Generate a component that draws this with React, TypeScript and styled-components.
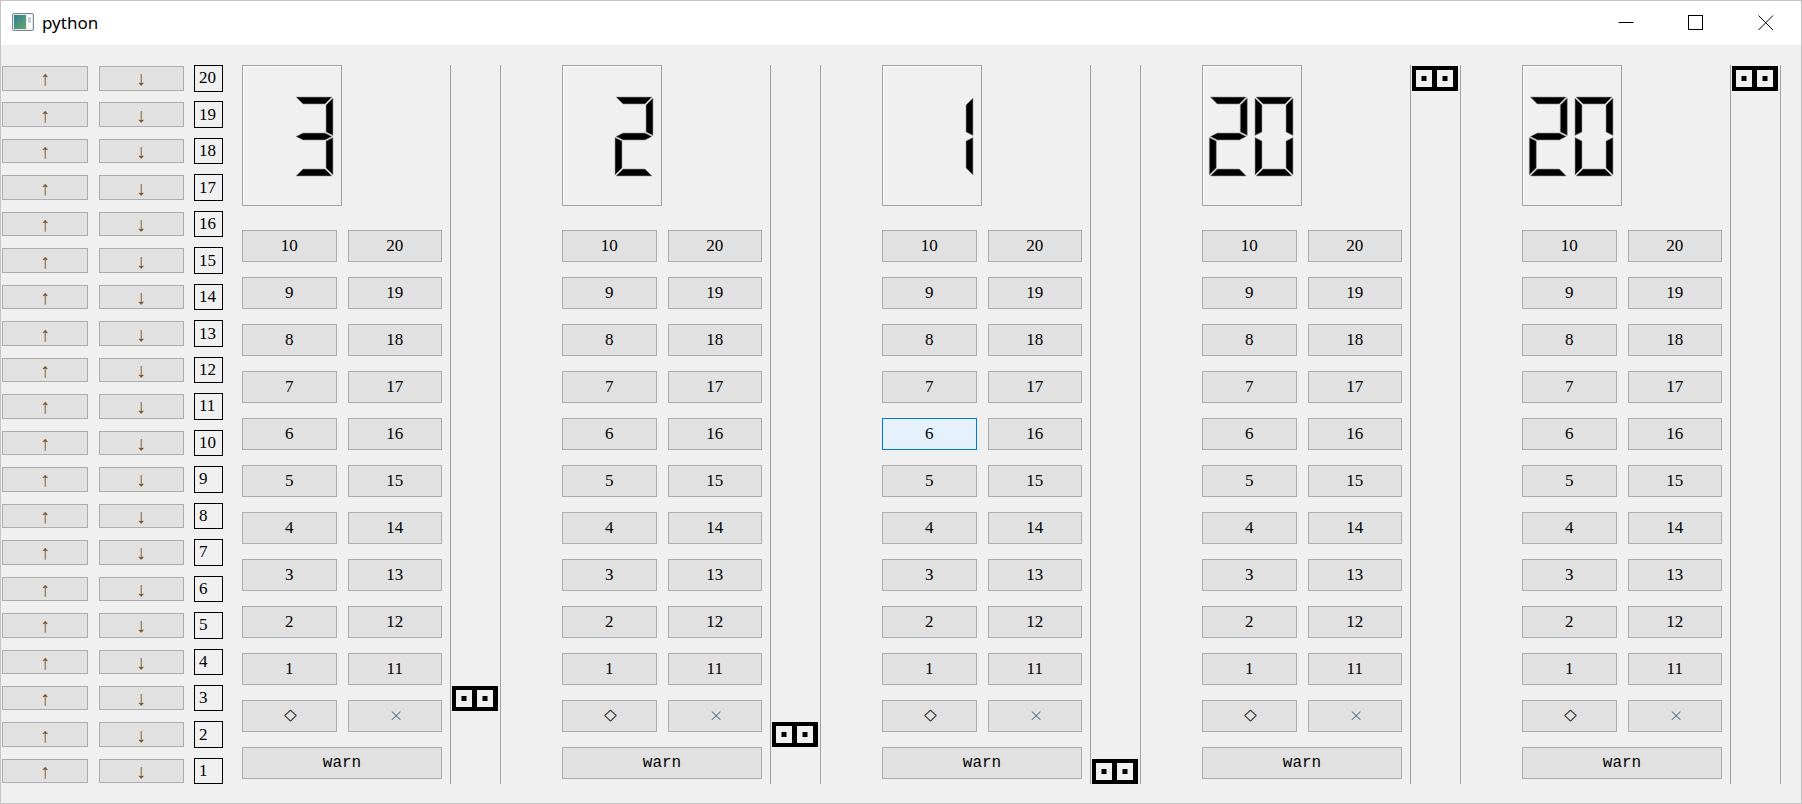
import React from "react";
import styled, { createGlobalStyle } from "styled-components";

const GlobalStyle = createGlobalStyle`
  html, body { margin: 0; padding: 0; background: #f0f0f0; }
  body { width: 1802px; height: 804px; overflow: hidden; }
  #root { width: 1802px; height: 804px; }
  * { box-sizing: border-box; }
`;

const Window = styled.div`
  width: 1802px;
  height: 804px;
  border: 1px solid #c4c4c4;
  display: flex;
  flex-direction: column;
  background: #f0f0f0;
  overflow: hidden;
`;

const TitleBar = styled.div`
  height: 44px;
  flex: none;
  background: #ffffff;
  display: flex;
  align-items: center;
  padding-left: 11px;
`;

const AppIcon = styled.svg`
  width: 22px;
  height: 18px;
  flex: none;
  margin-bottom: 3px;
`;

const Title = styled.span`
  font-family: "Noto Sans", "Open Sans", sans-serif;
  font-size: 17px;
  color: #000;
  margin-left: 8px;
  margin-bottom: 2px;
`;

const Controls = styled.div`
  margin-left: auto;
  display: flex;
  height: 100%;
`;

const ControlButton = styled.div`
  width: 70px;
  height: 100%;
  display: flex;
  align-items: center;
  justify-content: center;
  padding-bottom: 1px;
`;

const Content = styled.div`
  flex: 1;
  display: flex;
  align-items: flex-start;
  padding: 20px 0 0 1px;
`;

const FloorGrid = styled.div`
  display: grid;
  grid-template-columns: 86px 85px 29px;
  grid-template-rows: repeat(20, 26.5px);
  column-gap: 10.5px;
  row-gap: 9.97px;
  margin-right: 19px;
`;

const CallButton = styled.button`
  margin: 0;
  padding: 0;
  align-self: center;
  height: calc(100% - 2px);
  background: #e1e1e1;
  border: 1px solid #adadad;
  display: flex;
  align-items: center;
  justify-content: center;
  font-family: "Liberation Sans", "DejaVu Sans", sans-serif;
  font-size: 20px;
  color: #7a4a12;
  line-height: 1;
  overflow: hidden;
`;

const FloorLabel = styled.div`
  border: 1px solid #000;
  display: flex;
  align-items: center;
  padding-left: 4px;
  font-family: "Liberation Serif", serif;
  font-size: 17px;
  color: #000;
  background: #f0f0f0;
`;

const Panels = styled.div`
  display: flex;
  gap: 61px;
`;

const Panel = styled.div`
  display: flex;
  gap: 8px;
`;

const ControlColumn = styled.div`
  width: 200px;
  display: flex;
  flex-direction: column;
`;

const Lcd = styled.div`
  width: 100px;
  height: 141px;
  border: 1px solid #a0a0a0;
  box-shadow: inset 1px 1px 0 #ffffff;
  margin-bottom: 24px;
  display: flex;
`;

const ButtonGrid = styled.div`
  display: grid;
  grid-template-columns: 1fr 1fr;
  grid-template-rows: repeat(12, 31.5px);
  column-gap: 11px;
  row-gap: 15.5px;
`;

const PushButton = styled.button<{ $active?: boolean; $wide?: boolean; $mono?: boolean }>`
  margin: 0;
  padding: 0;
  background: ${(p) => (p.$active ? "#e5f1fb" : "#e1e1e1")};
  border: 1px solid ${(p) => (p.$active ? "#0078d7" : "#adadad")};
  grid-column: ${(p) => (p.$wide ? "1 / -1" : "auto")};
  font-family: ${(p) => (p.$mono ? '"Liberation Mono", monospace' : '"Liberation Serif", serif')};
  font-size: ${(p) => (p.$mono ? "16px" : "17px")};
  color: #000;
  display: flex;
  align-items: center;
  justify-content: center;
  overflow: hidden;
`;

const Glyphs = styled.span<{ $size: number; $spacing: number; $scale: number; $color: string }>`
  display: inline-block;
  font-family: "Liberation Serif", serif;
  font-size: ${(p) => p.$size}px;
  letter-spacing: ${(p) => p.$spacing}px;
  color: ${(p) => p.$color};
  transform: scaleX(${(p) => p.$scale});
  line-height: 1;
`;

const Shaft = styled.div`
  width: 51px;
  border-left: 1px solid #a0a0a0;
  border-right: 1px solid #a0a0a0;
  display: grid;
  grid-template-rows: repeat(20, 26.5px);
  row-gap: 9.97px;
  padding-left: 1px;
`;

const Indicator = styled.svg<{ $row: number }>`
  grid-row: ${(p) => p.$row};
  align-self: center;
  width: 46px;
  height: 25px;
  display: block;
`;

const SEGMENTS: Record<string, string> = {
  "0": "abcdef",
  "1": "bc",
  "2": "abged",
  "3": "abgcd",
  "4": "fgbc",
  "5": "afgcd",
  "6": "afgedc",
  "7": "abc",
  "8": "abcdefg",
  "9": "abcdfg",
  " ": "",
};

const W = 38;
const H = 79;
const T = 7;
const H2 = H / 2;

const SEG_POINTS: Record<string, number[][]> = {
  a: [[1, 0], [W - 1, 0], [W - 1 - T, T], [1 + T, T]],
  b: [[W, 1], [W, H2 - 1], [W - T, H2 - 1 - T / 2], [W - T, 1 + T]],
  c: [[W, H2 + 1], [W, H - 1], [W - T, H - 1 - T], [W - T, H2 + 1 + T / 2]],
  d: [[1, H], [W - 1, H], [W - 1 - T, H - T], [1 + T, H - T]],
  e: [[0, H2 + 1], [T, H2 + 1 + T / 2], [T, H - 1 - T], [0, H - 1]],
  f: [[0, 1], [T, 1 + T], [T, H2 - 1 - T / 2], [0, H2 - 1]],
  g: [
    [1, H2],
    [1 + T, H2 - T / 2],
    [W - 1 - T, H2 - T / 2],
    [W - 1, H2],
    [W - 1 - T, H2 + T / 2],
    [1 + T, H2 + T / 2],
  ],
};

function Digit({ ch, x }: { ch: string; x: number }) {
  const segs = SEGMENTS[ch] ?? "";
  return (
    <g transform={`translate(${x} 31)`}>
      {segs.split("").map((s) => (
        <polygon
          key={s}
          points={SEG_POINTS[s].map((p) => p.join(",")).join(" ")}
          fill="#000"
          stroke="#9a9a9a"
          strokeWidth={0.6}
        />
      ))}
    </g>
  );
}

function LcdNumber({ value }: { value: number }) {
  const text = String(value).padStart(2, " ");
  return (
    <Lcd>
      <svg width="98" height="139" viewBox="0 0 98 139">
        <Digit ch={text[0]} x={6.3} />
        <Digit ch={text[1]} x={52} />
      </svg>
    </Lcd>
  );
}

function CarIndicator({ floor }: { floor: number }) {
  return (
    <Indicator $row={21 - floor} viewBox="0 0 46 25">
      <rect x="0" y="0" width="46" height="25" fill="#000" />
      <rect x="4" y="4" width="16" height="17" fill="#f0f0f0" />
      <rect x="25" y="4" width="16" height="17" fill="#f0f0f0" />
      <rect x="9.5" y="10" width="5" height="5" fill="#000" />
      <rect x="30.5" y="10" width="5" height="5" fill="#000" />
    </Indicator>
  );
}

const floors = Array.from({ length: 20 }, (_, i) => 20 - i);
const elevators = [
  { floor: 3, active: -1 },
  { floor: 2, active: -1 },
  { floor: 1, active: 6 },
  { floor: 20, active: -1 },
  { floor: 20, active: -1 },
];

function ElevatorPanel({ floor, active }: { floor: number; active: number }) {
  const rows = Array.from({ length: 10 }, (_, k) => [10 - k, 20 - k]);
  return (
    <Panel>
      <ControlColumn>
        <LcdNumber value={floor} />
        <ButtonGrid>
          {rows.map(([l, r]) => (
            <React.Fragment key={l}>
              <PushButton $active={l === active}>{l}</PushButton>
              <PushButton $active={r === active}>{r}</PushButton>
            </React.Fragment>
          ))}
          <PushButton>
            <Glyphs $size={26} $spacing={-3} $scale={0.5} $color="#000">{"<>"}</Glyphs>
          </PushButton>
          <PushButton>
            <Glyphs $size={18} $spacing={-3} $scale={0.55} $color="#3b5470">{"><"}</Glyphs>
          </PushButton>
          <PushButton $wide $mono>
            warn
          </PushButton>
        </ButtonGrid>
      </ControlColumn>
      <Shaft>
        <CarIndicator floor={floor} />
      </Shaft>
    </Panel>
  );
}

export default function App() {
  return (
    <>
      <GlobalStyle />
      <Window>
        <TitleBar>
          <AppIcon viewBox="0 0 22 18">
            <defs>
              <linearGradient id="ig" x1="0" y1="0" x2="1" y2="1">
                <stop offset="0" stopColor="#2f7f93" />
                <stop offset="1" stopColor="#6aa86c" />
              </linearGradient>
            </defs>
            <rect x="0.5" y="0.5" width="21" height="17" rx="1.5" fill="#e4e8ec" stroke="#7c8894" />
            <rect x="2" y="2" width="12" height="14" fill="url(#ig)" />
            <rect x="15" y="2" width="5" height="14" fill="#ffffff" />
            <rect x="16" y="4" width="3" height="6" fill="#c9d0d6" />
          </AppIcon>
          <Title>python</Title>
          <Controls>
            <ControlButton>
              <svg width="16" height="16" viewBox="0 0 16 16">
                <line x1="0.5" y1="7.5" x2="15.5" y2="7.5" stroke="#000" strokeWidth="1" />
              </svg>
            </ControlButton>
            <ControlButton>
              <svg width="16" height="16" viewBox="0 0 16 16">
                <rect x="0.5" y="0.5" width="14" height="14" fill="none" stroke="#000" strokeWidth="1" />
              </svg>
            </ControlButton>
            <ControlButton>
              <svg width="16" height="16" viewBox="0 0 16 16">
                <line x1="0.5" y1="0.5" x2="15" y2="15" stroke="#000" strokeWidth="1" />
                <line x1="15" y1="0.5" x2="0.5" y2="15" stroke="#000" strokeWidth="1" />
              </svg>
            </ControlButton>
          </Controls>
        </TitleBar>
        <Content>
          <FloorGrid>
            {floors.map((f) => (
              <React.Fragment key={f}>
                <CallButton>↑</CallButton>
                <CallButton>↓</CallButton>
                <FloorLabel>{f}</FloorLabel>
              </React.Fragment>
            ))}
          </FloorGrid>
          <Panels>
            {elevators.map((e, i) => (
              <ElevatorPanel key={i} floor={e.floor} active={e.active} />
            ))}
          </Panels>
        </Content>
      </Window>
    </>
  );
}
